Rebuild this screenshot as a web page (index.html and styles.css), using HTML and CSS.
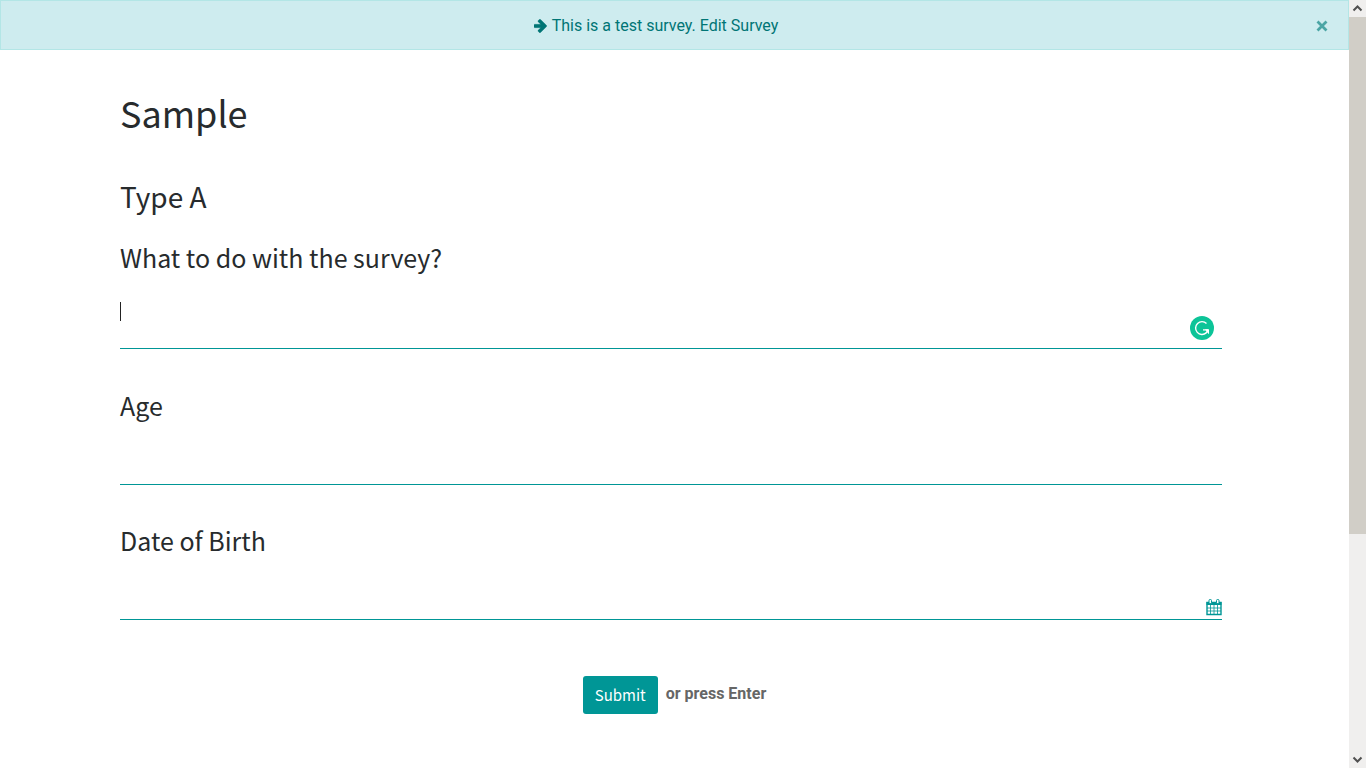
FILE: index.html
```html
<!DOCTYPE html>
<html lang="en">
<head>
<meta charset="utf-8">
<title>Sample</title>
<link rel="stylesheet" href="styles.css">
</head>
<body>
<div class="page">
  <div class="alert">
    <p class="alert-text">
      <a class="alert-link" href="#"><svg class="arrow" viewBox="0 0 14 14" aria-hidden="true"><path d="M.8 5.300h5.900L4.300 2.900a1 1 0 0 1 0-1.400l.9-.9a1 1 0 0 1 1.400 0l5.800 5.700a1 1 0 0 1 0 1.400l-5.800 5.700a1 1 0 0 1-1.400 0l-.9-.9a1 1 0 0 1 0-1.400l2.400-2.400H.8a.8.8 0 0 1-.8-.8V6.100a.8.8 0 0 1 .8-.8z" fill="currentColor" stroke="currentColor" stroke-width=".3"/></svg><span>This is a test survey. Edit Survey</span></a>
    </p>
    <button class="alert-close" type="button" aria-label="Close"><svg class="cross" viewBox="0 0 12 12" aria-hidden="true"><path d="M1.500 1.500l9 9M10.500 1.500l-9 9" stroke="currentColor" stroke-width="2.800"/></svg></button>
  </div>
  <main class="survey">
    <h1 class="title">Sample</h1>
    <form class="form">
      <h2 class="section">Type A</h2>
      <div class="field">
        <label class="label" for="what">What to do with the survey?</label>
        <div class="control">
          <textarea class="input input-long" id="what"></textarea>
          <span class="caret"></span>
          <svg class="checker" viewBox="0 0 24 24" aria-hidden="true"><circle cx="12" cy="12" r="12" fill="#0cc498"/><path d="M16.500 7.500a6.400 6.400 0 1 0-.3 9.400l1.600-2.400" fill="none" stroke="#fff" stroke-width="1.400"/><path d="M13 13.900h5" stroke="#fff" stroke-width="1.300"/><path d="M15 13.300h4v5l-1.500-1.500z" fill="#fff"/></svg>
        </div>
      </div>
      <div class="field">
        <label class="label" for="age">Age</label>
        <div class="control"><input class="input" id="age" type="text"></div>
      </div>
      <div class="field">
        <label class="label" for="birth">Date of Birth</label>
        <div class="control">
          <input class="input" id="birth" type="text">
          <svg class="calendar" viewBox="0 0 16 17" aria-hidden="true"><path d="M1 3.500h14v12H1z" fill="#fff" stroke="currentColor" stroke-width="1.400"/><path d="M.5 3h15v3H.5z" fill="currentColor"/><path d="M4.500 6v9M8 6v9M11.500 6v9M1 9h14M1 12h14" stroke="currentColor" stroke-width=".8"/><rect x="3" y=".5" width="2.500" height="4" rx="1" fill="#fff" stroke="currentColor"/><rect x="10.500" y=".5" width="2.500" height="4" rx="1" fill="#fff" stroke="currentColor"/></svg>
        </div>
      </div>
      <div class="actions">
        <button class="submit" type="submit">Submit</button>
        <span class="hint">or press Enter</span>
      </div>
    </form>
  </main>
</div>
<div class="scrollbar" aria-hidden="true">
  <svg class="scroll-arrow" viewBox="0 0 17 17"><path d="M4.500 10.500l4-4 4 4" fill="none" stroke="#505050" stroke-width="2"/></svg>
  <div class="track"><div class="thumb"></div></div>
  <svg class="scroll-arrow" viewBox="0 0 17 17"><path d="M4.500 6.500l4 4 4-4" fill="none" stroke="#505050" stroke-width="2"/></svg>
</div>
</body>
</html>
```
FILE: styles.css
```css
* { box-sizing: border-box; }

body {
  display: flex;
  min-height: 100vh;
  margin: 0;
  background: #fff;
  color: #272b2d;
  font: 16px/24px Roboto, sans-serif;
}

.page { flex: 1; min-width: 0; }

.alert {
  display: flex;
  align-items: center;
  padding: 13px 20px 11px;
  border: 1px solid #b3e6e6;
  background: #ceecef;
  color: #007575;
}

.alert-text {
  display: flex;
  flex: 1;
  justify-content: center;
  margin: 0;
  padding-right: 25px;
}

.alert-link {
  display: flex;
  align-items: center;
  gap: 4px;
  color: inherit;
  text-decoration: none;
}

.arrow { width: 14px; height: 14px; }

.alert-close {
  display: flex;
  margin: 0;
  padding: 0;
  border: 0;
  background: none;
  color: #4ba5a5;
}

.cross { width: 12px; height: 12px; }

.survey {
  max-width: 1139px;
  margin: 0 auto;
  padding: 38px 15px 48px;
}

.title, .section, .label, .submit {
  font-family: "Noto Sans CJK SC", sans-serif;
  font-weight: 400;
}

.title { margin: 0 0 42px; font-size: 36px; line-height: 48px; }

.section { margin: 0 0 27px; font-size: 28px; line-height: 36px; }

.field { margin: 0 7px 39px 0; }

.label {
  display: block;
  margin-bottom: 24px;
  font-size: 25px;
  line-height: 32px;
}

.control { position: relative; display: flex; }

.input {
  width: 100%;
  height: 40px;
  padding: 4px 0;
  border: 0;
  border-bottom: 1px solid #009696;
  outline: 0;
  background: transparent;
  color: inherit;
  font: inherit;
  resize: none;
}

.input-long { height: 52px; margin-bottom: 1px; }

.caret {
  position: absolute;
  top: 5px;
  left: 0;
  width: 1px;
  height: 19px;
  background: #222;
}

.checker {
  position: absolute;
  right: 8px;
  bottom: 10px;
  width: 24px;
  height: 24px;
}

.calendar {
  position: absolute;
  right: 0;
  bottom: 4px;
  width: 16px;
  height: 17px;
  color: #009696;
}

.actions {
  display: flex;
  justify-content: center;
  gap: 8px;
  padding-top: 17px;
}

.submit {
  height: 38px;
  padding: 0 12px;
  border: 0;
  border-radius: 3px;
  background: #009696;
  color: #fff;
  font-size: 15px;
  line-height: 24px;
}

.hint { padding-top: 6px; color: #666; font-weight: 700; }

.scrollbar {
  position: sticky;
  top: 0;
  display: flex;
  flex-direction: column;
  width: 17px;
  height: 100vh;
  background: #f0efee;
}

.scroll-arrow { display: block; width: 17px; height: 17px; }

.track { flex: 1; }

.thumb { height: 70.4%; background: #d1cec7; }
```
